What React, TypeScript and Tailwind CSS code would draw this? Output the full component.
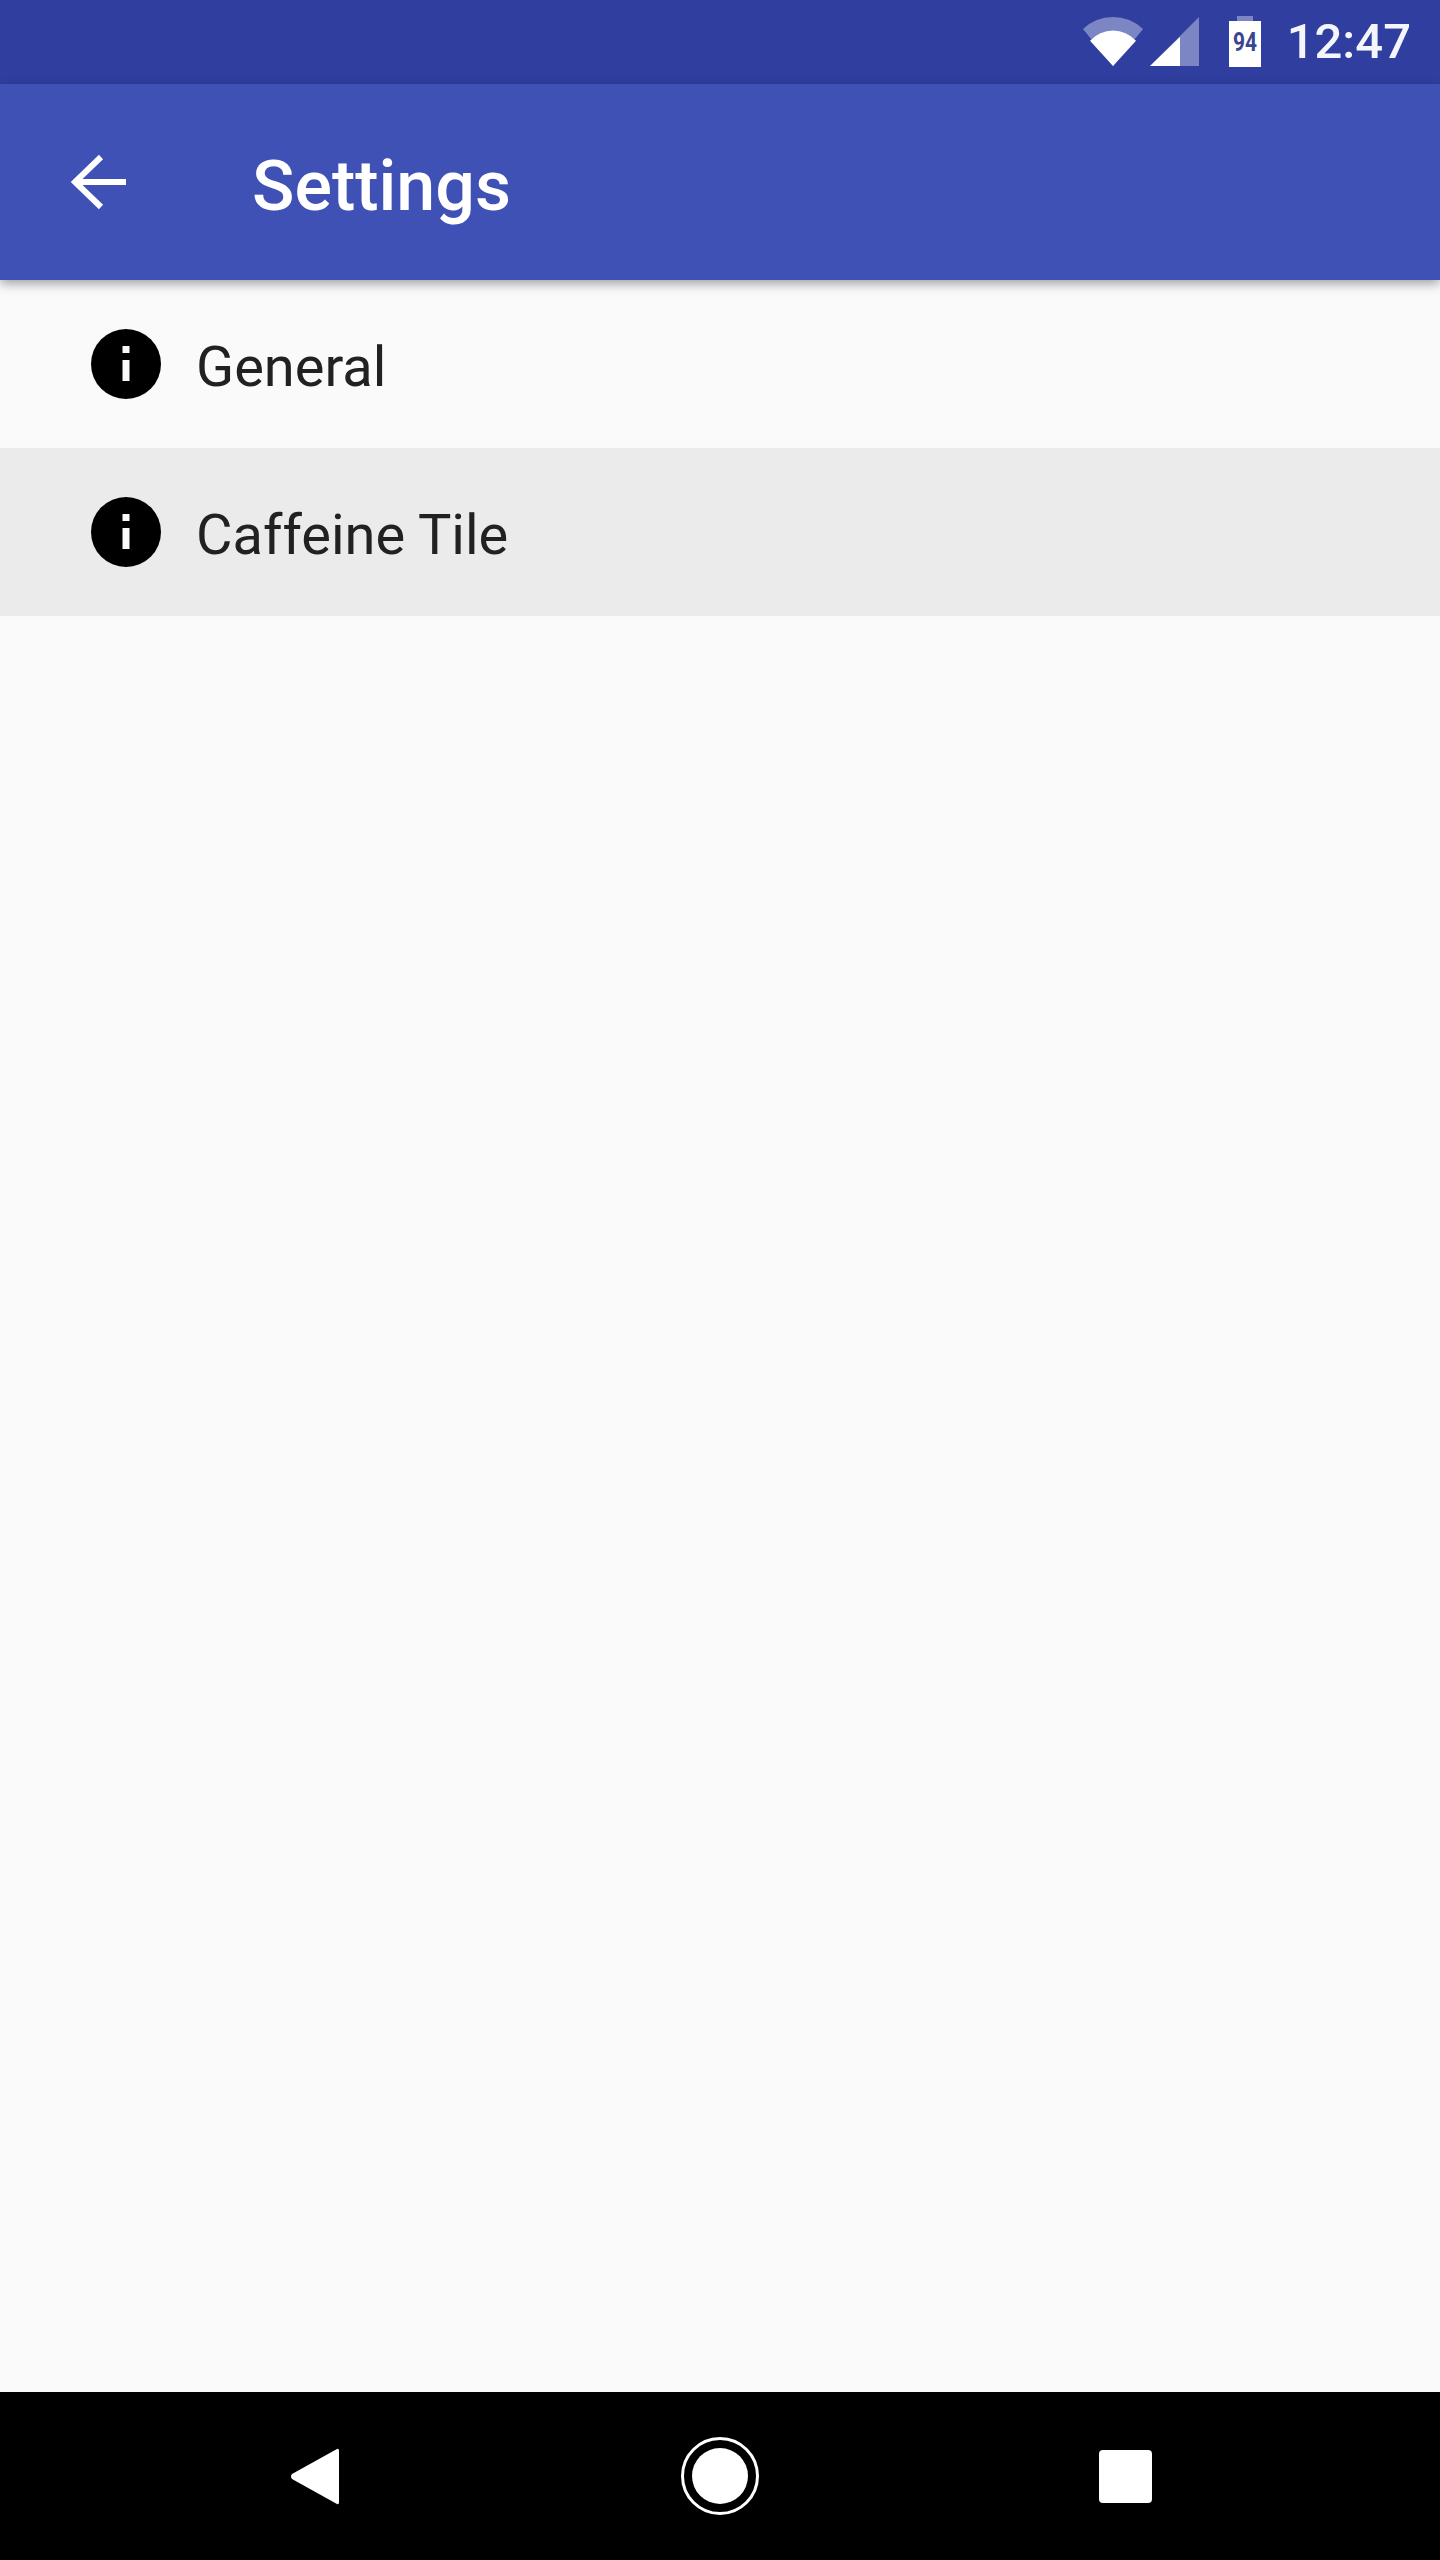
function StatusBar() {
  return (
    <div className="flex h-[84px] items-start justify-end bg-[#303F9F] pr-[29px] pt-[16px]">
      <svg width="60" height="50" viewBox="0 0 60 50" className="mr-[7px] mt-px">
        <path d="M0 12 A43.5 43.5 0 0 1 60 12 L30 49 Z" fill="#7C86C4" />
        <path d="M7 23.7 A31 31 0 0 1 53 23.7 L30 49 Z" fill="#fff" />
      </svg>
      <svg width="49" height="50" viewBox="0 0 49 50" className="mr-[30px] mt-px">
        <path d="M49 0 V49 H0 Z" fill="#7C86C4" />
        <path d="M30 20 V49 H0 Z" fill="#fff" />
      </svg>
      <svg width="32" height="51" viewBox="0 0 32 51">
        <rect x="8" y="0" width="16" height="6" fill="#7C86C4" />
        <rect x="0" y="5" width="32" height="46" fill="#fff" />
        <text
          x="16"
          y="35"
          textAnchor="middle"
          fill="#3A4590"
          fontSize="25"
          fontWeight="700"
          fontFamily="Roboto, sans-serif"
          textLength="24"
          lengthAdjust="spacingAndGlyphs"
        >
          94
        </text>
      </svg>
      <span className="ml-[26px] font-['Roboto',sans-serif] text-[49px] font-medium leading-[52px] text-[#F5F6FB]">
        12:47
      </span>
    </div>
  );
}

function AppBar() {
  return (
    <div className="relative z-10 flex h-[196px] items-center bg-[#3F51B5] pl-[71px] shadow-[0_4px_10px_rgba(0,0,0,0.35)]">
      <svg width="56" height="56" viewBox="0 0 56 56">
        <path d="M55 28 H5 M30 3 L4 28 L30 53" fill="none" stroke="#fff" strokeWidth="6" />
      </svg>
      <span className="ml-[125px] mt-[7px] font-['Roboto',sans-serif] text-[70px] font-medium leading-none text-white">
        Settings
      </span>
    </div>
  );
}

function InfoIcon() {
  return (
    <svg width="70" height="70" viewBox="0 0 70 70" className="shrink-0">
      <circle cx="35" cy="35" r="35" fill="#000" />
      <rect x="31.5" y="17" width="7" height="7" fill="#FAFAFA" />
      <rect x="31.5" y="31" width="7" height="21" fill="#FAFAFA" />
    </svg>
  );
}

function SettingsRow({ label, selected }: { label: string; selected?: boolean }) {
  return (
    <div className={`flex h-[168px] items-center pl-[91px] ${selected ? "bg-[#EBEBEB]" : ""}`}>
      <InfoIcon />
      <span className="ml-[35px] mt-[6px] font-['Roboto',sans-serif] text-[56px] leading-none text-[#212121]">
        {label}
      </span>
    </div>
  );
}

function NavBar() {
  return (
    <div className="flex h-[168px] items-start bg-black pl-[290px] pt-[45px]">
      <svg width="49" height="57" viewBox="0 0 49 57" className="mt-[11px]">
        <path
          d="M47 1 Q49 0 49 3 V54 Q49 57 47 56 L2 31 Q0 28.5 2 26 Z"
          fill="#fff"
        />
      </svg>
      <div className="ml-[342px] flex h-[78px] w-[78px] items-center justify-center rounded-full border-[3px] border-white">
        <div className="h-[56px] w-[56px] rounded-full bg-white" />
      </div>
      <div className="ml-[340px] mt-[13px] h-[53px] w-[53px] rounded-[4px] bg-white" />
    </div>
  );
}

export default function App() {
  return (
    <div className="flex h-[2560px] w-[1440px] flex-col overflow-hidden bg-[#FAFAFA]">
      <StatusBar />
      <AppBar />
      <div className="flex-1">
        <SettingsRow label="General" />
        <SettingsRow label="Caffeine Tile" selected />
      </div>
      <NavBar />
    </div>
  );
}
